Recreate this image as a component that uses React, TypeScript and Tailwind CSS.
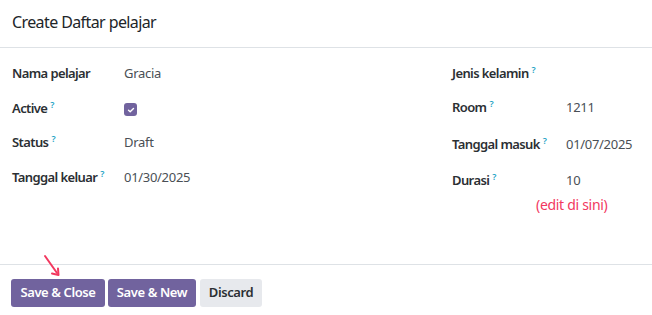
import type { ReactNode } from "react";

function Help() {
  return <sup className="ml-[3px] -top-[5px] text-[9px] font-semibold text-[#20a2c4]">?</sup>;
}

function Field({
  label,
  help,
  children,
  labelWidth,
  height,
}: {
  label: string;
  help?: boolean;
  children?: ReactNode;
  labelWidth: string;
  height: string;
}) {
  return (
    <div className={`flex items-center ${height}`}>
      <div className={`${labelWidth} shrink-0 font-semibold tracking-[-0.6px] text-[#2b2f33]`}>
        {label}
        {help ? <Help /> : null}
      </div>
      <div className="tracking-[-0.3px] text-[#4a4f55]">{children}</div>
    </div>
  );
}

export default function App() {
  return (
    <div
      className="relative h-[315px] w-[652px] overflow-hidden bg-white text-[13px]"
      style={{ fontFamily: '"Noto Sans", sans-serif' }}
    >
      <div className="flex h-[48px] items-center border-b border-[#dee2e6] px-[12px] pb-[4px]">
        <h1 className="text-[16px] tracking-[-0.6px] text-[#212529]">Create Daftar pelajar</h1>
      </div>

      <div className="flex h-[216px] pt-[9px]">
        <div className="flex w-[440px] flex-col pl-[12px]">
          <Field label="Nama pelajar" labelWidth="w-[112px]" height="h-[34px]">
            Gracia
          </Field>
          <Field label="Active" help labelWidth="w-[112px]" height="h-[35px]">
            <span className="mt-[2px] flex h-[13px] w-[13px] items-center justify-center rounded-[3px] bg-[#71639e]">
              <svg width="8" height="8" viewBox="0 0 8 8" fill="none">
                <path d="M1.5 4.2 3.2 5.8 6.5 2.4" stroke="white" strokeWidth="1.4" strokeLinecap="round" strokeLinejoin="round" />
              </svg>
            </span>
          </Field>
          <Field label="Status" help labelWidth="w-[112px]" height="h-[33px]">
            Draft
          </Field>
          <Field label="Tanggal keluar" help labelWidth="w-[112px]" height="h-[37px]">
            01/30/2025
          </Field>
        </div>

        <div className="flex flex-1 flex-col pl-[12px]">
          <Field label="Jenis kelamin" help labelWidth="w-[114px]" height="h-[34px]" />
          <Field label="Room" help labelWidth="w-[114px]" height="h-[34px]">
            1211
          </Field>
          <Field label="Tanggal masuk" help labelWidth="w-[114px]" height="h-[40px]">
            01/07/2025
          </Field>
          <Field label="Durasi" help labelWidth="w-[114px]" height="h-[32px]">
            10
          </Field>
          <div className="pl-[84px] text-[14px] leading-[16px] tracking-[-0.3px] text-[#f2385f]">(edit di sini)</div>
        </div>
      </div>

      <div className="flex gap-[3px] border-t border-[#dee2e6] px-[11px] pt-[14px] tracking-[-0.4px]">
        <button className="h-[28px] w-[94px] rounded-[3px] bg-[#71639e] font-semibold text-white">Save &amp; Close</button>
        <button className="h-[28px] w-[88px] rounded-[3px] bg-[#71639e] font-semibold text-white">Save &amp; New</button>
        <button className="ml-[1px] h-[28px] w-[62px] rounded-[3px] bg-[#e7e9ed] font-semibold text-[#2b2f33]">Discard</button>
      </div>

      <svg className="absolute left-[40px] top-[252px]" width="24" height="26" viewBox="0 0 24 26" fill="none">
        <path d="M5 4 17 21" stroke="#f2385f" strokeWidth="2" strokeLinecap="round" />
        <path d="M12 21.5 18.5 23 18 16.5" stroke="#f2385f" strokeWidth="2" strokeLinecap="round" strokeLinejoin="round" />
      </svg>
    </div>
  );
}
